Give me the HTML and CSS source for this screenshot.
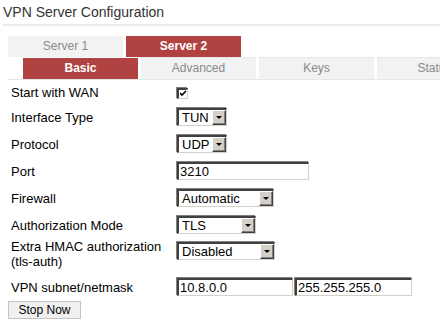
FILE: index.html
```html
<!DOCTYPE html>
<html lang="en">
<head>
  <meta charset="UTF-8" />
  <title>VPN Server Configuration</title>
  <link rel="stylesheet" href="styles.css">
</head>
<body>
  <!-- header -->
  <h1 class="page-title">VPN Server Configuration</h1>

  <!-- server tabs -->
  <div class="tabs tabs-main">
    <span class="tab">Server 1</span>
    <span class="tab active">Server 2</span>
  </div>

  <!-- section tabs -->
  <div class="tabs tabs-sub">
    <span class="tab active">Basic</span>
    <span class="tab">Advanced</span>
    <span class="tab">Keys</span>
    <span class="tab">Status</span>
  </div>

  <!-- form rows -->
  <div class="form">
    <div class="row row-check">
      <span class="label">Start with WAN</span>
      <span class="checkbox">
        <svg width="7" height="7" viewBox="0 0 7 7"><path d="M0 3 L2 5 L6 1" fill="none" stroke="#000" stroke-width="1.6"/></svg>
      </span>
    </div>
    <div class="row">
      <span class="label">Interface Type</span>
      <span class="select w-50"><span class="select-text">TUN</span><span class="select-arrow"></span></span>
    </div>
    <div class="row">
      <span class="label">Protocol</span>
      <span class="select w-50"><span class="select-text">UDP</span><span class="select-arrow"></span></span>
    </div>
    <div class="row">
      <span class="label">Port</span>
      <span class="input w-port">3210</span>
    </div>
    <div class="row">
      <span class="label">Firewall</span>
      <span class="select w-97"><span class="select-text">Automatic</span><span class="select-arrow"></span></span>
    </div>
    <div class="row">
      <span class="label">Authorization Mode</span>
      <span class="select w-79"><span class="select-text">TLS</span><span class="select-arrow"></span></span>
    </div>
    <div class="row row-top">
      <span class="label">Extra HMAC authorization<br>(tls-auth)</span>
      <span class="select w-98"><span class="select-text">Disabled</span><span class="select-arrow"></span></span>
    </div>
    <div class="row">
      <span class="label">VPN subnet/netmask</span>
      <span class="input w-net">10.8.0.0</span>
      <span class="input w-mask">255.255.255.0</span>
    </div>
  </div>

  <button class="btn">Stop Now</button>
</body>
</html>
```

FILE: styles.css
```css
/* page */
body {
  margin: 0;
  padding: 0;
  font-family: "Liberation Sans", Arial, sans-serif;
  font-size: 13px;
  color: #000;
  background: #fff;
  overflow: hidden;
}

/* header */
.page-title {
  margin: 0 0 0 3px;
  height: 24px;
  font-size: 14px;
  font-weight: normal;
  line-height: 24px;
  color: #333;
  border-bottom: 2px solid #ebebeb;
}

/* tabs */
.tabs {
  display: flex;
  gap: 3px;
  margin-left: 8px;
  white-space: nowrap;
}
.tabs-main {
  margin-top: 10px;
}
.tabs-sub {
  padding-left: 15px;
  border-bottom: 1px solid #e6e6e6;
}
.tab {
  flex: 0 0 115px;
  height: 21px;
  line-height: 21px;
  text-align: center;
  background: #f2f2f2;
  color: #8a8a8a;
  font-size: 12px;
}
.tab.active {
  background: #b04341;
  color: #fff;
  font-weight: bold;
}
.tabs-sub .tab {
  border-top: 1px solid #e6e6e6;
}
.tabs-sub .tab.active {
  border-top-color: #fff;
}

/* form rows */
.form {
  padding-left: 11px;
}
.row {
  display: flex;
  align-items: center;
  padding: 4px 0 5px;
  line-height: 15px;
}
.row-check {
  padding: 5px 0 4px;
}
.row-top {
  align-items: flex-start;
  padding-top: 3px;
}
.row-top .label {
  margin-top: -3px;
}
.label {
  flex: 0 0 166px;
}

/* sunken controls */
.checkbox,
.select,
.input {
  box-sizing: border-box;
  background: #fff;
  border-style: solid;
  border-width: 2px 1px 1px 2px;
  border-color: #404040 #d4d0c8 #d4d0c8 #404040;
  box-shadow: -1px -1px 0 #808080;
}
.checkbox {
  display: flex;
  align-items: center;
  justify-content: center;
  width: 11px;
  height: 11px;
  margin-top: 1px;
}
.select,
.input {
  display: flex;
  align-items: center;
  height: 18px;
}
.select-text {
  flex: 1;
  padding-left: 3px;
  overflow: hidden;
}
.select-arrow {
  position: relative;
  box-sizing: border-box;
  width: 14px;
  height: 15px;
  background: #d4d0c8;
  border: 1px solid;
  border-color: #fff #404040 #404040 #fff;
  box-shadow: inset -1px -1px 0 #808080;
}
.select-arrow::after {
  content: "";
  position: absolute;
  left: 3px;
  top: 5px;
  border-left: 3px solid transparent;
  border-right: 3px solid transparent;
  border-top: 3px solid #000;
}
.input {
  padding-left: 1px;
}

.w-50 { width: 50px; }
.w-79 { width: 79px; }
.w-97 { width: 97px; }
.w-98 { width: 98px; }
.w-port { width: 132px; }
.w-net { width: 116px; margin-right: 2px; }
.w-mask { width: 117px; }

/* button */
.btn {
  display: block;
  margin-left: 8px;
  width: 73px;
  height: 18px;
  padding: 0;
  font-family: inherit;
  font-size: 12px;
  color: #000;
  background: #f0f0f0;
  border: 1px solid #c4c4c4;
}
```
